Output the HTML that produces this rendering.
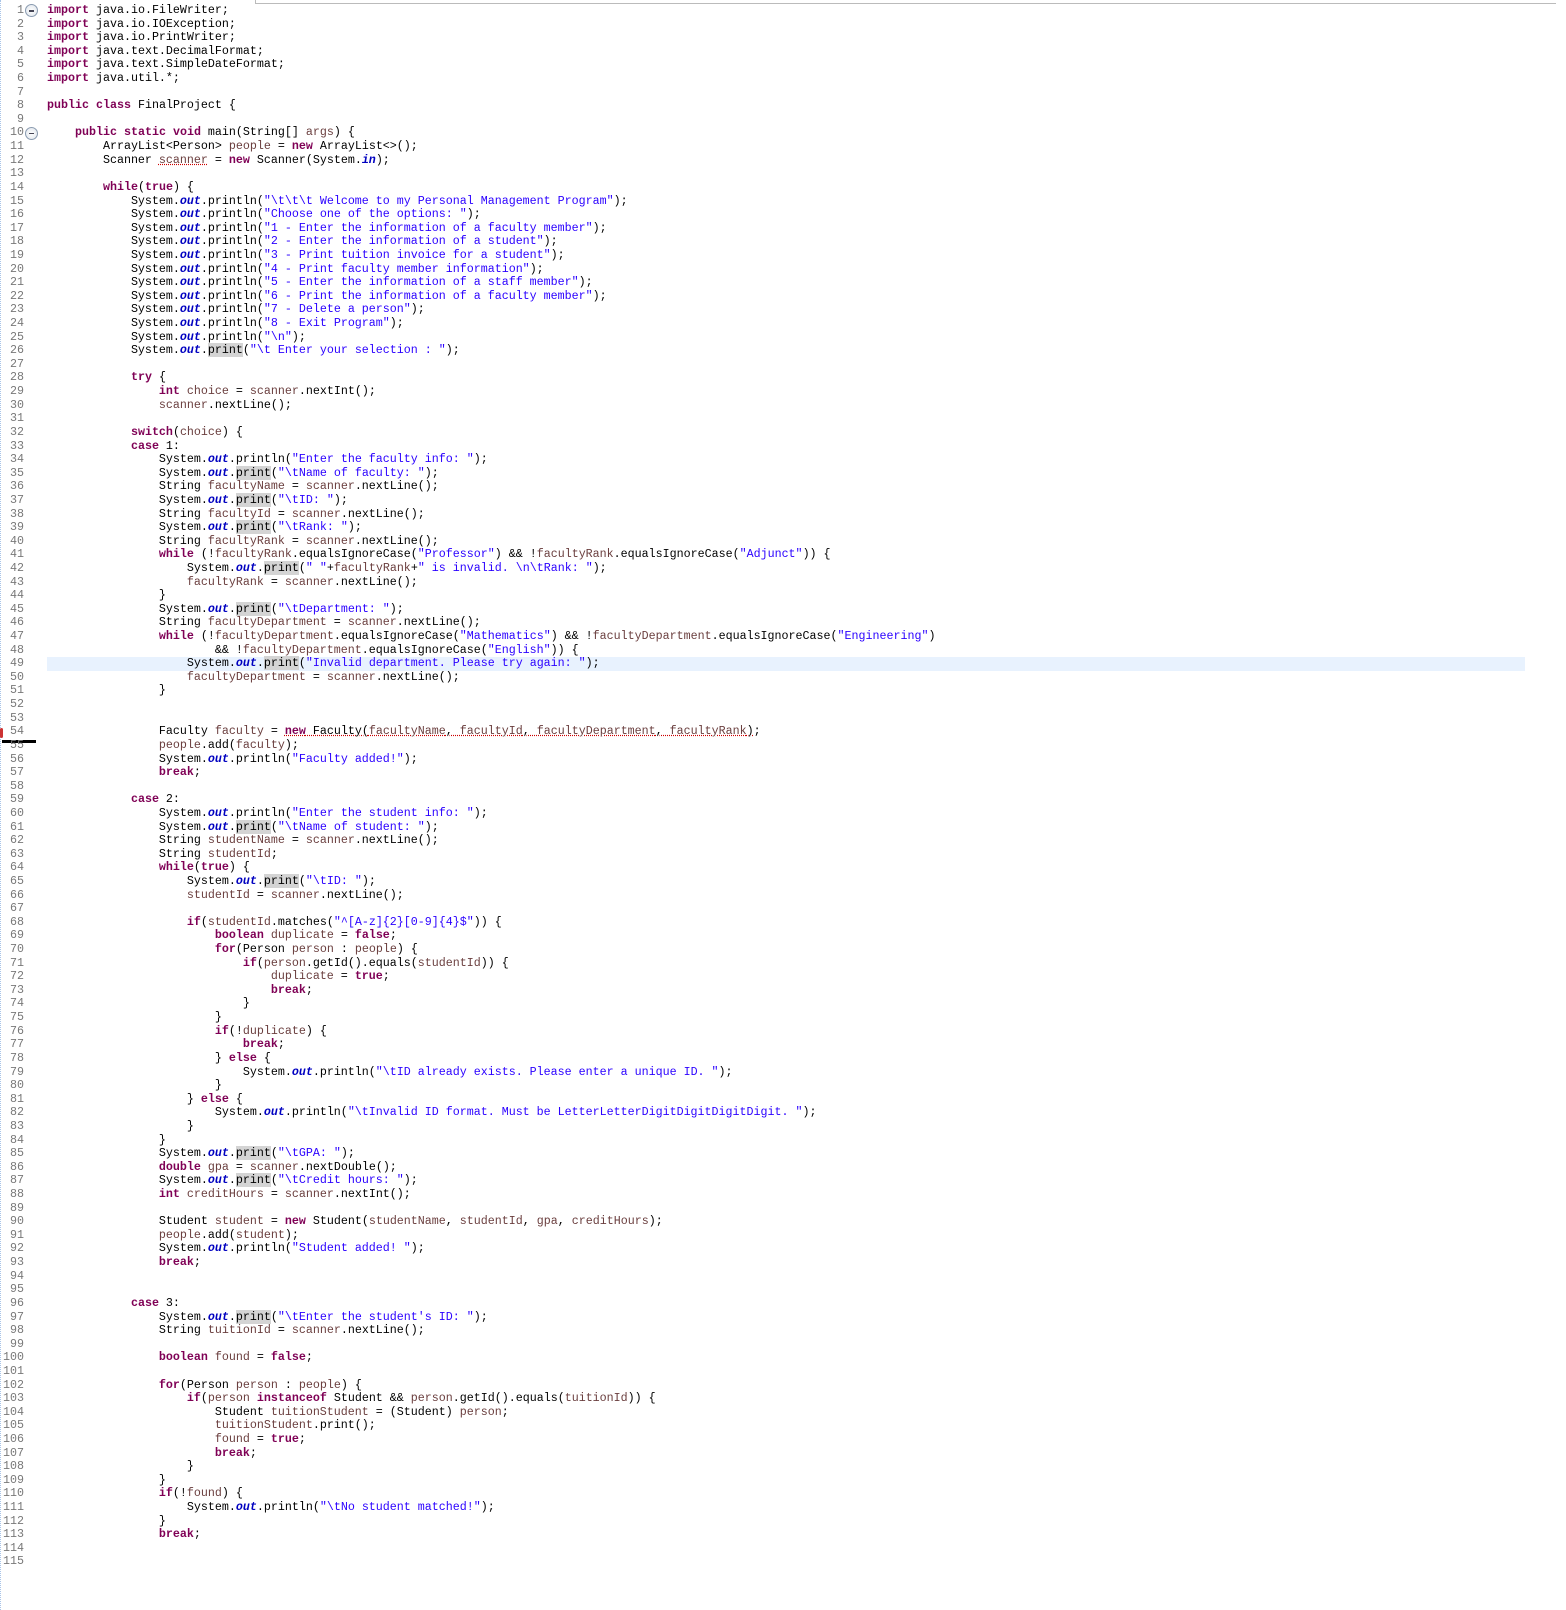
<!DOCTYPE html>
<html><head><meta charset="utf-8"><style>
html,body{margin:0;padding:0;background:#fff;width:1566px;height:1610px;overflow:hidden}
body{position:relative;font-family:"Liberation Mono",monospace;font-size:11.67px;}
#ln{position:absolute;left:0;top:4px;width:24px;text-align:right;color:#787878;line-height:13.61px;white-space:pre}
#code{position:absolute;left:47px;top:4px;line-height:13.61px;white-space:pre;color:#000}
.k{color:#7f0055;font-weight:bold}.s{color:#2a00ff}.v{color:#6a3e3e}.o{color:#0000c0;font-weight:bold;font-style:italic}
.p{background:#d4d4d4}
.u{text-decoration:underline dotted #c00}
#hl{position:absolute;left:47px;top:657.3px;right:41px;height:13.61px;background:#e8f2fe}
#box{position:absolute;left:255px;top:0;right:10px;height:3px;border-left:1px solid #bbb;border-bottom:1px solid #bbb}
#dots{position:absolute;left:0;top:0;bottom:0;width:0;border-left:1px dotted #a8c4e8}
.fold{position:absolute;left:25px;width:13px;height:13px;border-radius:50%;border:1px solid #8a9bb0;background:radial-gradient(#fff,#dde3ea);box-sizing:border-box}
.fold:after{content:"";position:absolute;left:3px;top:5px;width:5px;height:1.5px;background:#445}
</style></head><body>
<div id="dots"></div>
<div id="box"></div>
<div id="hl"></div>
<div class="fold" style="top:4px"></div>
<div class="fold" style="top:126.5px"></div>
<div style="position:absolute;left:2px;top:740px;width:34px;height:3px;background:#000"></div>
<div style="position:absolute;left:0;top:728px;width:3px;height:10px;background:#c33;border-radius:2px"></div>
<div id="ln">1
2
3
4
5
6
7
8
9
10
11
12
13
14
15
16
17
18
19
20
21
22
23
24
25
26
27
28
29
30
31
32
33
34
35
36
37
38
39
40
41
42
43
44
45
46
47
48
49
50
51
52
53
54
55
56
57
58
59
60
61
62
63
64
65
66
67
68
69
70
71
72
73
74
75
76
77
78
79
80
81
82
83
84
85
86
87
88
89
90
91
92
93
94
95
96
97
98
99
100
101
102
103
104
105
106
107
108
109
110
111
112
113
114
115</div>
<div id="code"><span class="k">import</span> java.io.FileWriter;
<span class="k">import</span> java.io.IOException;
<span class="k">import</span> java.io.PrintWriter;
<span class="k">import</span> java.text.DecimalFormat;
<span class="k">import</span> java.text.SimpleDateFormat;
<span class="k">import</span> java.util.*;

<span class="k">public</span> <span class="k">class</span> FinalProject {

    <span class="k">public</span> <span class="k">static</span> <span class="k">void</span> main(String[] <span class="v">args</span>) {
        ArrayList&lt;Person&gt; <span class="v">people</span> = <span class="k">new</span> ArrayList&lt;&gt;();
        Scanner <span class="v u">scanner</span> = <span class="k">new</span> Scanner(System.<span class="o">in</span>);

        <span class="k">while</span>(<span class="k">true</span>) {
            System.<span class="o">out</span>.println(<span class="s">"\t\t\t Welcome to my Personal Management Program"</span>);
            System.<span class="o">out</span>.println(<span class="s">"Choose one of the options: "</span>);
            System.<span class="o">out</span>.println(<span class="s">"1 - Enter the information of a faculty member"</span>);
            System.<span class="o">out</span>.println(<span class="s">"2 - Enter the information of a student"</span>);
            System.<span class="o">out</span>.println(<span class="s">"3 - Print tuition invoice for a student"</span>);
            System.<span class="o">out</span>.println(<span class="s">"4 - Print faculty member information"</span>);
            System.<span class="o">out</span>.println(<span class="s">"5 - Enter the information of a staff member"</span>);
            System.<span class="o">out</span>.println(<span class="s">"6 - Print the information of a faculty member"</span>);
            System.<span class="o">out</span>.println(<span class="s">"7 - Delete a person"</span>);
            System.<span class="o">out</span>.println(<span class="s">"8 - Exit Program"</span>);
            System.<span class="o">out</span>.println(<span class="s">"\n"</span>);
            System.<span class="o">out</span>.<span class="p">print</span>(<span class="s">"\t Enter your selection : "</span>);

            <span class="k">try</span> {
                <span class="k">int</span> <span class="v">choice</span> = <span class="v">scanner</span>.nextInt();
                <span class="v">scanner</span>.nextLine();

            <span class="k">switch</span>(<span class="v">choice</span>) {
            <span class="k">case</span> 1:
                System.<span class="o">out</span>.println(<span class="s">"Enter the faculty info: "</span>);
                System.<span class="o">out</span>.<span class="p">print</span>(<span class="s">"\tName of faculty: "</span>);
                String <span class="v">facultyName</span> = <span class="v">scanner</span>.nextLine();
                System.<span class="o">out</span>.<span class="p">print</span>(<span class="s">"\tID: "</span>);
                String <span class="v">facultyId</span> = <span class="v">scanner</span>.nextLine();
                System.<span class="o">out</span>.<span class="p">print</span>(<span class="s">"\tRank: "</span>);
                String <span class="v">facultyRank</span> = <span class="v">scanner</span>.nextLine();
                <span class="k">while</span> (!<span class="v">facultyRank</span>.equalsIgnoreCase(<span class="s">"Professor"</span>) &amp;&amp; !<span class="v">facultyRank</span>.equalsIgnoreCase(<span class="s">"Adjunct"</span>)) {
                    System.<span class="o">out</span>.<span class="p">print</span>(<span class="s">" "</span>+<span class="v">facultyRank</span>+<span class="s">" is invalid. \n\tRank: "</span>);
                    <span class="v">facultyRank</span> = <span class="v">scanner</span>.nextLine();
                }
                System.<span class="o">out</span>.<span class="p">print</span>(<span class="s">"\tDepartment: "</span>);
                String <span class="v">facultyDepartment</span> = <span class="v">scanner</span>.nextLine();
                <span class="k">while</span> (!<span class="v">facultyDepartment</span>.equalsIgnoreCase(<span class="s">"Mathematics"</span>) &amp;&amp; !<span class="v">facultyDepartment</span>.equalsIgnoreCase(<span class="s">"Engineering"</span>)
                        &amp;&amp; !<span class="v">facultyDepartment</span>.equalsIgnoreCase(<span class="s">"English"</span>)) {
                    System.<span class="o">out</span>.<span class="p">print</span>(<span class="s">"Invalid department. Please try again: "</span>);
                    <span class="v">facultyDepartment</span> = <span class="v">scanner</span>.nextLine();
                }


                Faculty <span class="v">faculty</span> = <span class="k u">new</span><span class="u"> Faculty(</span><span class="v u">facultyName</span><span class="u">, </span><span class="v u">facultyId</span><span class="u">, </span><span class="v u">facultyDepartment</span><span class="u">, </span><span class="v u">facultyRank</span><span class="u">)</span>;
                <span class="v">people</span>.add(<span class="v">faculty</span>);
                System.<span class="o">out</span>.println(<span class="s">"Faculty added!"</span>);
                <span class="k">break</span>;

            <span class="k">case</span> 2:
                System.<span class="o">out</span>.println(<span class="s">"Enter the student info: "</span>);
                System.<span class="o">out</span>.<span class="p">print</span>(<span class="s">"\tName of student: "</span>);
                String <span class="v">studentName</span> = <span class="v">scanner</span>.nextLine();
                String <span class="v">studentId</span>;
                <span class="k">while</span>(<span class="k">true</span>) {
                    System.<span class="o">out</span>.<span class="p">print</span>(<span class="s">"\tID: "</span>);
                    <span class="v">studentId</span> = <span class="v">scanner</span>.nextLine();

                    <span class="k">if</span>(<span class="v">studentId</span>.matches(<span class="s">"^[A-z]{2}[0-9]{4}$"</span>)) {
                        <span class="k">boolean</span> <span class="v">duplicate</span> = <span class="k">false</span>;
                        <span class="k">for</span>(Person <span class="v">person</span> : <span class="v">people</span>) {
                            <span class="k">if</span>(<span class="v">person</span>.getId().equals(<span class="v">studentId</span>)) {
                                <span class="v">duplicate</span> = <span class="k">true</span>;
                                <span class="k">break</span>;
                            }
                        }
                        <span class="k">if</span>(!<span class="v">duplicate</span>) {
                            <span class="k">break</span>;
                        } <span class="k">else</span> {
                            System.<span class="o">out</span>.println(<span class="s">"\tID already exists. Please enter a unique ID. "</span>);
                        }
                    } <span class="k">else</span> {
                        System.<span class="o">out</span>.println(<span class="s">"\tInvalid ID format. Must be LetterLetterDigitDigitDigitDigit. "</span>);
                    }
                }
                System.<span class="o">out</span>.<span class="p">print</span>(<span class="s">"\tGPA: "</span>);
                <span class="k">double</span> <span class="v">gpa</span> = <span class="v">scanner</span>.nextDouble();
                System.<span class="o">out</span>.<span class="p">print</span>(<span class="s">"\tCredit hours: "</span>);
                <span class="k">int</span> <span class="v">creditHours</span> = <span class="v">scanner</span>.nextInt();

                Student <span class="v">student</span> = <span class="k">new</span> Student(<span class="v">studentName</span>, <span class="v">studentId</span>, <span class="v">gpa</span>, <span class="v">creditHours</span>);
                <span class="v">people</span>.add(<span class="v">student</span>);
                System.<span class="o">out</span>.println(<span class="s">"Student added! "</span>);
                <span class="k">break</span>;


            <span class="k">case</span> 3:
                System.<span class="o">out</span>.<span class="p">print</span>(<span class="s">"\tEnter the student's ID: "</span>);
                String <span class="v">tuitionId</span> = <span class="v">scanner</span>.nextLine();

                <span class="k">boolean</span> <span class="v">found</span> = <span class="k">false</span>;

                <span class="k">for</span>(Person <span class="v">person</span> : <span class="v">people</span>) {
                    <span class="k">if</span>(<span class="v">person</span> <span class="k">instanceof</span> Student &amp;&amp; <span class="v">person</span>.getId().equals(<span class="v">tuitionId</span>)) {
                        Student <span class="v">tuitionStudent</span> = (Student) <span class="v">person</span>;
                        <span class="v">tuitionStudent</span>.print();
                        <span class="v">found</span> = <span class="k">true</span>;
                        <span class="k">break</span>;
                    }
                }
                <span class="k">if</span>(!<span class="v">found</span>) {
                    System.<span class="o">out</span>.println(<span class="s">"\tNo student matched!"</span>);
                }
                <span class="k">break</span>;
</div>
</body></html>
